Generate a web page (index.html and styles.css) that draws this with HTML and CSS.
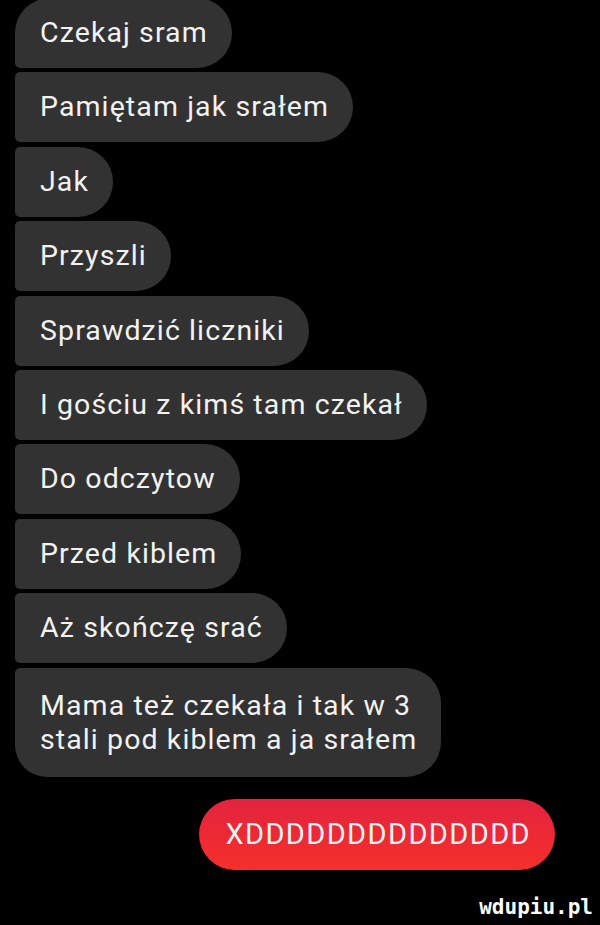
FILE: index.html
```html
<!DOCTYPE html>
<html lang="pl">
<head>
  <meta charset="UTF-8" />
  <meta name="viewport" content="width=device-width, initial-scale=1.0"/>
  <title>Czat</title>

  <link rel="stylesheet" href="styles.css">
</head>

<body>
  <main class="chat">
    <div class="group">
      <div class="msg first">Czekaj sram</div>
      <div class="msg">Pamiętam jak srałem</div>
      <div class="msg">Jak</div>
      <div class="msg">Przyszli</div>
      <div class="msg">Sprawdzić liczniki</div>
      <div class="msg">I gościu z kimś tam czekał</div>
      <div class="msg">Do odczytow</div>
      <div class="msg">Przed kiblem</div>
      <div class="msg">Aż skończę srać</div>
      <div class="msg last">Mama też czekała i tak w 3<br>stali pod kiblem a ja srałem</div>
    </div>

    <div class="mine">
      <div class="msg-red">XDDDDDDDDDDDDDD</div>
    </div>
  </main>

  <footer class="mark">wdupiu.pl</footer>
</body>
</html>
```

FILE: styles.css
```css
body {
  margin: 0;
  height: 925px;
  overflow: hidden;
  background: #000;
  font-family: Roboto, 'Noto Sans', sans-serif;
  color: #f2f2f2;
  position: relative;
}

.chat {
  padding: 0 15px;
}

.group {
  display: flex;
  flex-direction: column;
  align-items: flex-start;
  gap: 4.4px;
  margin-top: -2px;
}

.msg {
  background: #323232;
  font-size: 28.5px;
  letter-spacing: 1.1px;
  line-height: 34px;
  padding: 18px 24px 18px 25px;
  border-radius: 5px 35px 35px 5px;
}

.msg.first {
  border-top-left-radius: 35px;
}

.msg.last {
  padding-top: 21px;
  padding-bottom: 20px;
  border-bottom-left-radius: 32px;
}

.mine {
  display: flex;
  justify-content: flex-end;
  padding-right: 30px;
  margin-top: 22px;
}

.msg-red {
  background: linear-gradient(180deg, #e3233f, #f52f2b);
  font-size: 29px;
  letter-spacing: 1.4px;
  line-height: 35px;
  padding: 18px 24px 18px 26px;
  border-radius: 36px;
}

.mark {
  position: absolute;
  right: 7px;
  bottom: 6px;
  font-family: 'DejaVu Sans Mono', monospace;
  font-weight: bold;
  font-size: 21px;
  color: #fff;
}
```
